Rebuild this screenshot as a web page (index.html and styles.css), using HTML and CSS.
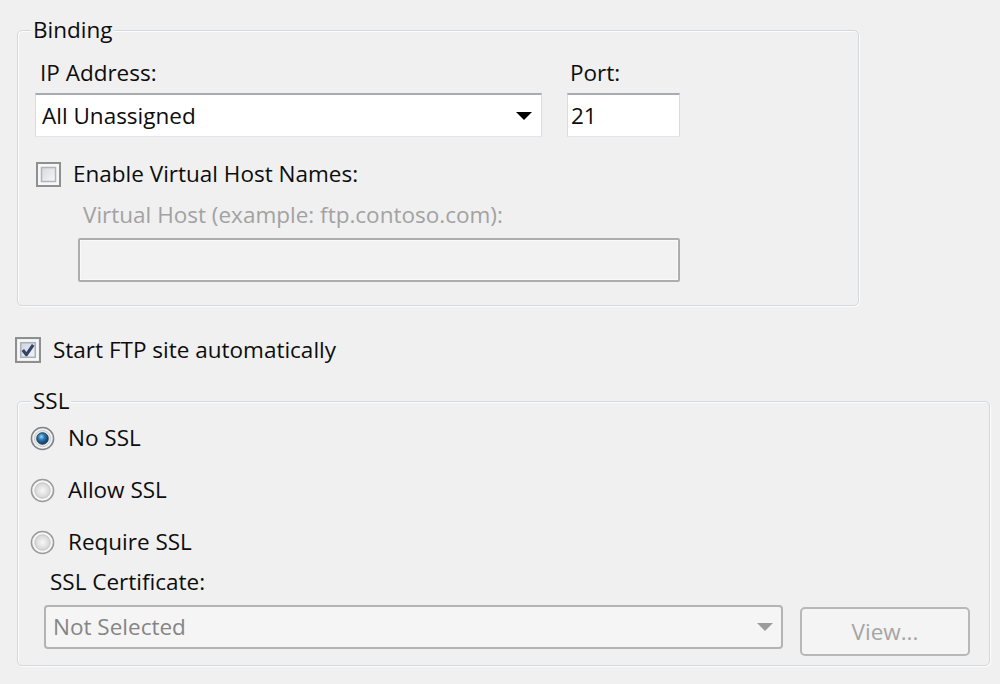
FILE: index.html
```html
<!DOCTYPE html>
<html lang="en">
<head>
<meta charset="utf-8">
<title>FTP Site Binding and SSL Settings</title>
<link rel="stylesheet" href="styles.css">
</head>
<body>
<div class="page">
  <fieldset class="group binding">
    <legend class="group-title">Binding</legend>
    <div class="ip-grid">
      <div class="field-label ip-label">IP Address:</div>
      <div class="field-label port-label">Port:</div>
      <div class="combo">
        <span class="combo-text">All Unassigned</span>
        <span class="arrow"></span>
      </div>
      <div class="textbox port-box">21</div>
    </div>
    <div class="check-row vhost-check">
      <svg class="checkbox" width="25" height="25" viewBox="0 0 25 25">
        <defs>
          <linearGradient id="cbg1" x1="0" y1="0" x2="1" y2="1">
            <stop offset="0" stop-color="#d6d8db"/>
            <stop offset="1" stop-color="#f8f8f8"/>
          </linearGradient>
        </defs>
        <rect x="1" y="1" width="23" height="23" fill="#f7f7f7" stroke="#8e8f8f" stroke-width="2"/>
        <rect x="5.5" y="5.5" width="14" height="14" fill="url(#cbg1)" stroke="#b1b4b8" stroke-width="1.5"/>
      </svg>
      <span class="check-text">Enable Virtual Host Names:</span>
    </div>
    <div class="disabled-label">Virtual Host (example: ftp.contoso.com):</div>
    <div class="textbox disabled vhost-box"></div>
  </fieldset>

  <div class="check-row auto-start">
    <svg class="checkbox" width="26" height="26" viewBox="0 0 25 25">
      <defs>
        <linearGradient id="cbg2" x1="0" y1="0" x2="1" y2="1">
          <stop offset="0" stop-color="#cdd3dc"/>
          <stop offset="1" stop-color="#f4f6f8"/>
        </linearGradient>
      </defs>
      <rect x="1" y="1" width="23" height="23" fill="#f7f7f7" stroke="#8e8f8f" stroke-width="2"/>
      <rect x="5.5" y="5.5" width="14" height="14" fill="url(#cbg2)" stroke="#a9b0ba" stroke-width="1.5"/>
      <path d="M7.5 12.5 L11 17 L17.5 7.5" fill="none" stroke="#34436a" stroke-width="3" stroke-linejoin="round"/>
    </svg>
    <span class="check-text">Start FTP site automatically</span>
  </div>

  <fieldset class="group ssl">
    <legend class="group-title">SSL</legend>
    <div class="radio-row first">
      <svg class="radio" width="25" height="25" viewBox="0 0 26 26">
        <defs>
          <radialGradient id="dot" cx="0.4" cy="0.35" r="0.6">
            <stop offset="0" stop-color="#9ad6f7"/>
            <stop offset="0.45" stop-color="#2f7ab8"/>
            <stop offset="1" stop-color="#143f66"/>
          </radialGradient>
        </defs>
        <circle cx="13" cy="13" r="11.5" fill="#f4f4f4" stroke="#7f8388" stroke-width="1.6"/>
        <circle cx="13" cy="13" r="8.5" fill="#e6e6e6" stroke="#c9c9c9" stroke-width="1"/>
        <circle cx="13" cy="13" r="6" fill="url(#dot)" stroke="#1d3b57" stroke-width="1"/>
      </svg>
      <span class="radio-text">No SSL</span>
    </div>
    <div class="radio-row">
      <svg class="radio" width="25" height="25" viewBox="0 0 26 26">
        <defs>
          <radialGradient id="off1" cx="0.5" cy="0.5" r="0.5">
            <stop offset="0" stop-color="#f8f8f8"/>
            <stop offset="1" stop-color="#d4d4d4"/>
          </radialGradient>
        </defs>
        <circle cx="13" cy="13" r="11.5" fill="#f6f6f6" stroke="#9b9b9b" stroke-width="1.6"/>
        <circle cx="13" cy="13" r="8" fill="url(#off1)" stroke="#c4c4c4" stroke-width="1"/>
      </svg>
      <span class="radio-text">Allow SSL</span>
    </div>
    <div class="radio-row">
      <svg class="radio" width="25" height="25" viewBox="0 0 26 26">
        <circle cx="13" cy="13" r="11.5" fill="#f6f6f6" stroke="#9b9b9b" stroke-width="1.6"/>
        <circle cx="13" cy="13" r="8" fill="url(#off1)" stroke="#c4c4c4" stroke-width="1"/>
      </svg>
      <span class="radio-text">Require SSL</span>
    </div>
    <div class="cert-block">
      <div class="field-label cert-label">SSL Certificate:</div>
      <div class="cert-grid">
        <div class="combo disabled-combo">
          <span class="combo-text">Not Selected</span>
          <span class="arrow gray"></span>
        </div>
        <div class="button disabled-button">View...</div>
      </div>
    </div>
  </fieldset>
</div>
</body>
</html>
```

FILE: styles.css
```css
html, body {
  margin: 0;
  padding: 0;
  background: #f0f0f0;
}

body {
  font-family: "Open Sans", "Noto Sans", "Liberation Sans", sans-serif;
  font-size: 22.5px;
  line-height: 30px;
  color: #0d0d0d;
  width: 1000px;
  height: 684px;
  overflow: hidden;
}

.page {
  padding: 18px 0 0 15px;
}

.group {
  margin: 0 0 0 2px;
  border: 1px solid #d3d8dc;
  border-radius: 5px;
  box-shadow: inset 1px 1px 0 #fcfcfc, 1px 1px 0 #fcfcfc;
  box-sizing: border-box;
  min-width: 0;
}

.group-title {
  padding: 0 2px;
  line-height: 24px;
  background: #f0f0f0;
}

/* Binding */
.binding {
  width: 842px;
  padding: 16px 17px 23px 17px;
}

.binding .group-title {
  margin-left: -4px;
}

.ip-grid {
  display: grid;
  grid-template-columns: 507px 113px;
  column-gap: 25px;
  row-gap: 5px;
}

.ip-label {
  padding-left: 5px;
}

.port-label {
  padding-left: 3px;
}

.combo {
  height: 44px;
  box-sizing: border-box;
  background: #fff;
  border-style: solid;
  border-width: 2px 1px 1px 1px;
  border-color: #a8abb0 #d8dbe0 #e2e5e9 #d8dbe0;
  display: flex;
  align-items: center;
  justify-content: space-between;
  padding: 0 9px 0 6px;
}

.arrow {
  width: 0;
  height: 0;
  border-left: 8px solid transparent;
  border-right: 8px solid transparent;
  border-top: 8px solid #000;
}

.arrow.gray {
  border-top-color: #9c9c9c;
}

.textbox {
  height: 44px;
  box-sizing: border-box;
  background: #fff;
  border-style: solid;
  border-width: 2px 1px 1px 1px;
  border-color: #a8abb0 #d8dbe0 #e2e5e9 #d8dbe0;
  padding-left: 3px;
  display: flex;
  align-items: center;
}

.check-row {
  display: flex;
  align-items: center;
  height: 30px;
}

.checkbox {
  flex: none;
}

.vhost-check {
  margin-top: 22px;
  margin-left: 1px;
  gap: 12px;
}

.disabled-label {
  margin-top: 11px;
  padding-left: 48px;
  color: #a2a2a2;
}

.textbox.disabled {
  width: 602px;
  margin: 8px 0 0 43px;
  background: #f2f2f2;
  border: 2px solid #adadad;
  border-radius: 2px;
  box-shadow: inset 0 0 0 1px #fafafa;
}

/* Start automatically */
.auto-start {
  margin-top: 29px;
  gap: 12px;
}

/* SSL */
.ssl {
  width: 973px;
  margin-top: 24px;
  padding: 10px 19px 9px 12px;
}

.ssl .group-title {
  margin-left: 1px;
}

.radio-row {
  display: flex;
  align-items: center;
  gap: 13px;
  height: 30px;
  margin-top: 22px;
}

.radio-row.first {
  margin-top: 0;
}

.radio {
  flex: none;
}

.cert-block {
  margin-top: 10px;
  padding-left: 14px;
}

.cert-label {
  padding-left: 6px;
}

.cert-grid {
  display: grid;
  grid-template-columns: 739px 170px;
  column-gap: 17px;
  align-items: start;
  margin-top: 8px;
}

.disabled-combo {
  background: #f5f5f5;
  border: 2px solid #b3b3b3;
  border-radius: 4px;
  color: #858585;
  padding: 0 8px 0 7px;
}

.button {
  height: 49px;
  margin-top: 2px;
  box-sizing: border-box;
  display: flex;
  align-items: center;
  justify-content: center;
}

.disabled-button {
  background: #f4f4f4;
  border: 2px solid #b8b8b8;
  border-radius: 5px;
  color: #a5a5a5;
}
```
